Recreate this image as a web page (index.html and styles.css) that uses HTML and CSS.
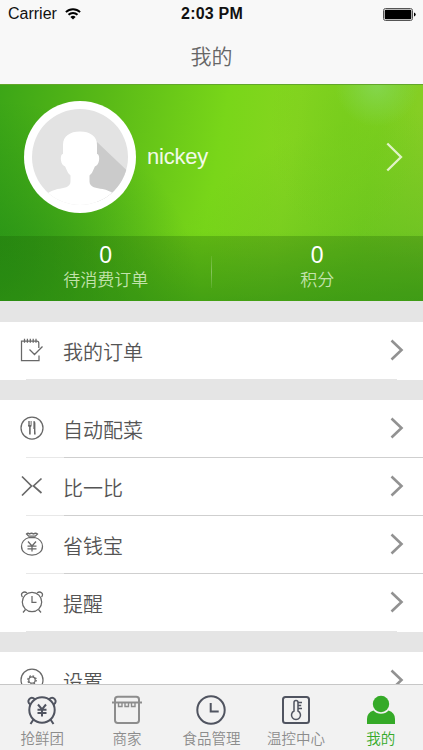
FILE: index.html
```html
<!DOCTYPE html>
<html lang="zh-CN">
<head>
<meta charset="utf-8">
<title>我的</title>
<link rel="stylesheet" href="styles.css">
</head>
<body>
<div class="app">
  <header class="header">
    <div class="status">
      <div class="carrier">Carrier
        <svg width="16" height="12" viewBox="0 0 16 12" fill="none" stroke="#000" stroke-width="1.9"><path d="M.9 4.1a10.2 10.2 0 0 1 14.2 0M3.5 6.8a6.4 6.4 0 0 1 9 0"/><path d="M8 11.6 5.4 9.1a3.7 3.7 0 0 1 5.2 0z" fill="#000" stroke="none"/></svg>
      </div>
      <div class="time">2:03 PM</div>
      <svg class="battery" width="33" height="13" viewBox="0 0 33 13"><rect x=".5" y=".5" width="29" height="12" rx="2" fill="none" stroke="#555"/><rect x="1.7" y="1.7" width="26.6" height="9.6" rx="1" fill="#000"/><path d="M31 4.5q1.7.3 1.7 2t-1.7 2z" fill="#000"/></svg>
    </div>
    <h1 class="title">我的</h1>
  </header>

  <section class="banner">
    <div class="profile">
      <svg class="avatar" width="112" height="112" viewBox="0 0 112 112">
        <defs><clipPath id="face"><circle cx="56" cy="56" r="48"/></clipPath></defs>
        <circle cx="56" cy="56" r="56" fill="#fff"/>
        <g clip-path="url(#face)">
          <rect width="112" height="112" fill="#e3e3e3"/>
          <path d="M73 41 112 78V112H76L62 76z" fill="#cbcbcb"/>
          <path d="M39 53V44C39 35 46 30.500 56 30.500S73 35 73 44v9c3 0 3 9-.5 11.500q-2 .5-2.500 3-1.500 4.500-4.500 7v6c0 6 7 6.500 13 7.500q7 1.500 10.500 4.500v21H23V92.500q4-3 10.500-4.500c6-1 13-1.500 13-7.500v-6q-3-2.500-4.500-7-.5-2.500-2.500-3C36 62 36 53 39 53z" fill="#fff"/>
        </g>
      </svg>
      <span class="name">nickey</span>
      <svg class="more" width="17" height="30" viewBox="0 0 17 30" fill="none" stroke="#e1f3c7" stroke-width="2.3"><path d="M1.3 1.5 15 15 1.3 28.5"/></svg>
    </div>
    <div class="stats">
      <div class="stat"><b>0</b><span>待消费订单</span></div>
      <div class="stat"><b>0</b><span>积分</span></div>
    </div>
  </section>

  <main class="groups">
    <section class="group single">
      <div class="row">
        <svg class="icon" viewBox="0 0 24 24"><path d="M19 17.5V22.5H1.5V3H4M18.8 10V5q0-2-2-2H16M4 3h12M4.5.8v4M7.4.8v4M10.3.8v4M13.2.8v4M16 .8v4M9.5 11.5l5 5 8-8"/></svg>
        <span class="label">我的订单</span>
        <svg class="arrow" viewBox="0 0 14 22"><path d="M1.5 1.5 11.5 11 1.5 20.5"/></svg>
      </div>
    </section>
    <section class="group">
      <div class="row">
        <svg class="icon" viewBox="0 0 24 24"><circle cx="12" cy="12" r="11"/><path class="solid" d="M8 5h.7v4h.6V5h1v4h.6V5h.7v4.5q0 1-.9 1.5v7.5H9.1V11Q8 10.5 8 9.5zM13.4 5.2q2-.5 2 2V14.5l.3 4h-1.700V13h-.6z"/></svg>
        <span class="label">自动配菜</span>
        <svg class="arrow" viewBox="0 0 14 22"><path d="M1.5 1.5 11.5 11 1.5 20.5"/></svg>
      </div>
      <div class="row">
        <svg class="icon bold" viewBox="0 0 24 24"><path d="M2 2.500 11.500 12 2 21.500M21.500 4.500 13.500 12l8 7"/></svg>
        <span class="label">比一比</span>
        <svg class="arrow" viewBox="0 0 14 22"><path d="M1.5 1.5 11.5 11 1.5 20.5"/></svg>
      </div>
      <div class="row">
        <svg class="icon" viewBox="0 0 24 24"><path d="M9 5.500C4 7 1.500 11 1.500 14.500c0 5 4.500 8.500 10.500 8.500s10.500-3.500 10.500-8.500C22.500 11 20 7 15 5.500M6.500 2q1.500-1.500 3 0 2-1.500 4 0 2-1.500 4 0L15.300 4.200H8.700zM8.800 5.500h6.400M8 9.500l4 4.500 4-4.500M12 14v5.500M7.500 14h9M7.500 16.800h9"/></svg>
        <span class="label">省钱宝</span>
        <svg class="arrow" viewBox="0 0 14 22"><path d="M1.5 1.5 11.5 11 1.5 20.5"/></svg>
      </div>
      <div class="row">
        <svg class="icon" viewBox="0 0 24 24"><circle cx="12" cy="12" r="9.700"/><path d="M2.500 7Q.5 4.500 2.500 2.800T7 3M21.500 7q2-2.500 0-4.200T17 3M5.500 19.500l-2.500 3M18.500 19.500l2.500 3M12 6v6.300h4.500"/></svg>
        <span class="label">提醒</span>
        <svg class="arrow" viewBox="0 0 14 22"><path d="M1.5 1.5 11.5 11 1.5 20.5"/></svg>
      </div>
    </section>
    <section class="group">
      <div class="row">
        <svg class="icon" viewBox="0 0 24 24"><circle cx="12" cy="12" r="11"/><circle cx="12" cy="12" r="3.200"/><circle cx="12" cy="12" r="4.200" stroke-dasharray="1.650 1.650"/></svg>
        <span class="label">设置</span>
        <svg class="arrow" viewBox="0 0 14 22"><path d="M1.5 1.5 11.5 11 1.5 20.5"/></svg>
      </div>
    </section>
  </main>

  <nav class="tabs">
    <div class="tab">
      <svg class="tabicon dark" viewBox="0 0 30 30"><circle cx="15" cy="15" r="12.700"/><path d="M3.300 9.500Q0 7 2.300 4.200T8 4.200M26.700 9.500Q30 7 27.700 4.200T22 4.200M6.500 24.500 3.500 29M23.500 24.500l3 4.500M11 9.500l4 4.800 4-4.800M15 14.300v7.200M10.500 14.800h9M10.500 18h9"/></svg>
      <span>抢鲜团</span>
    </div>
    <div class="tab">
      <svg class="tabicon gray" viewBox="0 0 30 30"><path d="M3 7.500V4.500q0-2.700 2.700-2.700h18.600q2.700 0 2.700 2.700v3M0 7.500h30M3 7.500v17.800q0 2.700 2.700 2.700h18.600q2.700 0 2.700-2.700V7.500"/><path class="fringe" d="M6.500 8v3.500h3.500V8M13 8v3.500h3.500V8M19.500 8v3.500h3.500V8"/></svg>
      <span>商家</span>
    </div>
    <div class="tab">
      <svg class="tabicon dark" viewBox="0 0 30 30"><circle cx="15" cy="15" r="13.700"/><path d="M14.700 8v8.500h8"/></svg>
      <span>食品管理</span>
    </div>
    <div class="tab">
      <svg class="tabicon dark" viewBox="0 0 30 30"><rect x="2" y="2" width="26" height="26" rx="2.500"/><path d="M13 16V7.500q0-2 2-2t2 2V16a4.500 4.500 0 1 1-4 0zM17.500 7.500h3.500M17.500 10.500h2.700M17.500 13.500h3.500" stroke-width="1.500"/></svg>
      <span>温控中心</span>
    </div>
    <div class="tab active">
      <svg class="tabicon person" viewBox="0 0 30 30"><circle cx="15" cy="9" r="8.200"/><path d="M1 29V24q0-6.500 6.500-8.500a10.200 10.200 0 0 0 15 0Q29 17.500 29 24v5z"/></svg>
      <span>我的</span>
    </div>
  </nav>
</div>
</body>
</html>
```

FILE: styles.css
```css
* { box-sizing: border-box; }

body {
  margin: 0;
  background: #e5e5e5;
  font-family: "Liberation Sans", "Noto Sans CJK SC", sans-serif;
  font-weight: 350;
}

svg { display: block; flex: none; }

.app {
  display: flex;
  flex-direction: column;
  width: 423px;
  height: 750px;
  overflow: hidden;
}

.header {
  flex: none;
  height: 84px;
  background: #f8f8f8;
}

.status {
  display: grid;
  grid-template-columns: 1fr auto 1fr;
  align-items: center;
  height: 28px;
  padding: 0 7px 0 8px;
  font-size: 16px;
  color: #111;
}

.carrier { display: flex; align-items: center; gap: 8px; }
.time { font-weight: 700; letter-spacing: .2px; }
.battery { justify-self: end; }

.title {
  margin: 0;
  font-size: 21px;
  font-weight: 350;
  line-height: 58px;
  text-align: center;
  color: #666;
}

.banner {
  display: flex;
  flex: none;
  flex-direction: column;
  height: 217px;
  border-top: 1px solid #62a62a;
  background:
    radial-gradient(circle at 377px 0, rgba(134, 216, 88, .8), rgba(134, 212, 60, 0) 42px),
    radial-gradient(ellipse 75px 120px at 345px 40px, rgba(112, 202, 26, .55), rgba(112, 202, 26, 0)),
    linear-gradient(to bottom, rgba(60, 170, 25, 0) 68%, rgba(60, 170, 25, .6)),
    radial-gradient(ellipse 260px 190px at 100% 100%, rgba(70, 180, 28, .55), rgba(70, 180, 28, 0)),
    radial-gradient(ellipse 200px 200px at 0 100%, rgba(16, 126, 22, .65), rgba(16, 126, 22, 0)),
    linear-gradient(100deg, #3ca617 0, #5aba17 24%, #79d619 50%, #86d520 66%, #7fcf20 84%, #8ccd28);
}

.profile {
  display: flex;
  align-items: center;
  height: 151px;
  padding: 0 20px 8px 24px;
}

.name {
  margin-left: 11px;
  font-size: 22px;
  letter-spacing: -.2px;
  color: #f2fae9;
}

.more { margin-left: auto; }

.stats {
  position: relative;
  display: grid;
  grid-template-columns: 1fr 1fr;
  height: 65px;
  background: rgba(20, 85, 0, .24);
}

.stats::after {
  content: "";
  position: absolute;
  left: 211px;
  top: 20px;
  width: 1px;
  height: 32px;
  background: linear-gradient(rgba(255, 255, 255, .08), rgba(255, 255, 255, .3), rgba(255, 255, 255, .08));
}

.stat {
  display: flex;
  flex-direction: column;
  align-items: center;
  padding-top: 6px;
  color: #fff;
}

.stat b {
  font-family: "Liberation Sans", sans-serif;
  font-size: 23px;
  font-weight: 400;
  line-height: 26px;
}

.stat span {
  font-size: 17px;
  line-height: 26px;
  color: #c3e3ac;
}

.groups {
  display: flex;
  flex: 1;
  flex-direction: column;
  gap: 20px;
  min-height: 0;
  padding-top: 21px;
  overflow: hidden;
}

.group { flex: none; background: #fff; }

.row {
  display: flex;
  align-items: center;
  height: 58px;
  padding: 0 20px;
  background: linear-gradient(to right, transparent 26px, #e8e8e8 26px, #e8e8e8 64px, #cfcfcf 64px) bottom / 100% 1px no-repeat;
}

.row:last-child {
  background: linear-gradient(to right, transparent 26px, #e5e5e5 26px, #e5e5e5 397px, transparent 397px) bottom / 100% 1px no-repeat;
}

.icon {
  width: 24px;
  height: 24px;
  margin-top: -2px;
  fill: none;
  stroke: #686868;
  stroke-width: 1.25;
}

.icon.bold { stroke-width: 1.7; }
.icon .solid { fill: #686868; stroke: none; }

.label {
  margin-left: 19px;
  font-size: 20px;
  line-height: 28px;
  padding-top: 4px;
  color: #555;
}

.arrow {
  width: 14px;
  height: 22px;
  margin: -2px -1px 0 auto;
  fill: none;
  stroke: #929292;
  stroke-width: 2.6;
}

.tabs {
  display: grid;
  flex: none;
  grid-template-columns: repeat(5, 1fr);
  height: 66px;
  border-top: 1px solid #c7c7c7;
  background: #f2f2f2;
}

.tab {
  display: flex;
  flex-direction: column;
  align-items: center;
  padding-top: 10px;
  font-size: 14.5px;
  line-height: 22px;
  color: #8c8c8c;
}

.tab span { margin-top: 3px; }
.tab.active { color: #35aa28; }

.tabicon {
  width: 30px;
  height: 30px;
  fill: none;
  stroke-width: 2;
}

.dark { stroke: #505460; }
.gray { stroke: #8d8d8d; }
.fringe { stroke-width: 1.4; }
.person { fill: #35aa28; }
```
